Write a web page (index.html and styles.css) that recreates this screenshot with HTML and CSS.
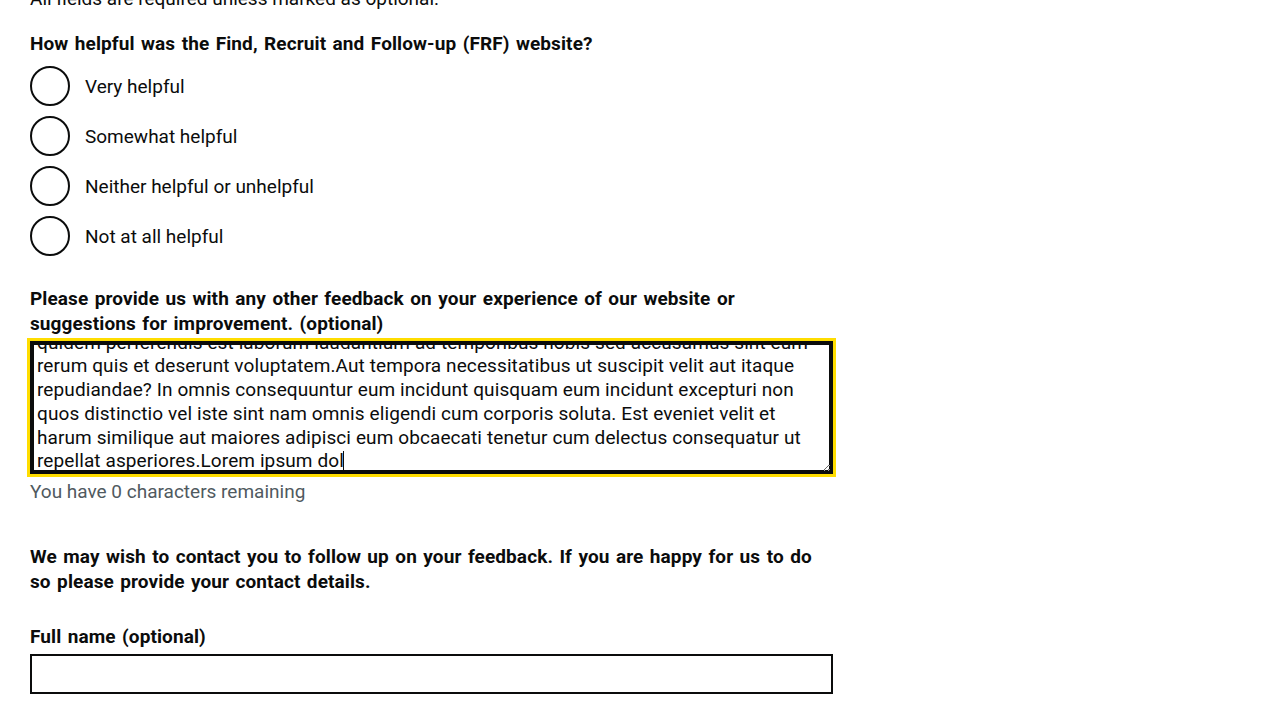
FILE: index.html
```html
<!DOCTYPE html>
<html lang="en">
<head>
<meta charset="utf-8">
<title>Give feedback - Find, Recruit and Follow-up</title>
<link rel="stylesheet" href="styles.css">
</head>
<body>
<main class="page">
  <div class="column">
    <h1 class="page-title">Give feedback on Find, Recruit and Follow-up</h1>
    <p class="body-text js-intro">All fields are required unless marked as optional.</p>

    <div class="form-group">
      <fieldset class="fieldset">
        <legend class="legend">How helpful was the Find, Recruit and Follow-up (FRF) website?</legend>
        <div class="radios">
          <div class="radio-item">
            <input class="radio-input" id="helpful-1" name="helpful" type="radio" value="very">
            <label class="radio-label" for="helpful-1">Very helpful</label>
          </div>
          <div class="radio-item">
            <input class="radio-input" id="helpful-2" name="helpful" type="radio" value="somewhat">
            <label class="radio-label" for="helpful-2">Somewhat helpful</label>
          </div>
          <div class="radio-item">
            <input class="radio-input" id="helpful-3" name="helpful" type="radio" value="neither">
            <label class="radio-label" for="helpful-3">Neither helpful or unhelpful</label>
          </div>
          <div class="radio-item">
            <input class="radio-input" id="helpful-4" name="helpful" type="radio" value="not">
            <label class="radio-label" for="helpful-4">Not at all helpful</label>
          </div>
        </div>
      </fieldset>
    </div>

    <div class="form-group char-count">
      <label class="label" for="feedback">Please provide us with any other feedback on your experience of our website or suggestions for improvement. (optional)</label>
      <div class="textarea-wrap">
        <textarea class="textarea is-focused js-feedback" id="feedback" name="feedback" rows="5">Lorem ipsum dolor sit amet. Aut quidem perferendis est laborum laudantium ad temporibus nobis sed accusamus sint eum rerum quis et deserunt voluptatem.Aut tempora necessitatibus ut suscipit velit aut itaque repudiandae? In omnis consequuntur eum incidunt quisquam eum incidunt excepturi non quos distinctio vel iste sint nam omnis eligendi cum corporis soluta. Est eveniet velit et harum similique aut maiores adipisci eum obcaecati tenetur cum delectus consequatur ut repellat asperiores.Lorem ipsum dolor sit amet. Aut
quidem perferendis est laborum laudantium ad temporibus nobis sed accusamus sint eum
rerum quis et deserunt voluptatem.Aut tempora necessitatibus ut suscipit velit aut itaque repudiandae? In omnis consequuntur eum incidunt quisquam eum incidunt excepturi non quos distinctio vel iste sint nam omnis eligendi cum corporis soluta. Est eveniet velit et harum similique aut maiores adipisci eum obcaecati tenetur cum delectus consequatur ut repellat asperiores.Lorem ipsum dol</textarea>
        <span class="caret" aria-hidden="true"></span>
      </div>
      <div class="hint count-message">You have 0 characters remaining</div>
    </div>

    <p class="body-text bold contact-intro">We may wish to contact you to follow up on your feedback. If you are happy for us to do so please provide your contact details.</p>

    <div class="form-group">
      <label class="label" for="full-name">Full name (optional)</label>
      <input class="input" id="full-name" name="fullName" type="text">
    </div>

    <div class="form-group">
      <label class="label" for="email">Email address (optional)</label>
      <input class="input" id="email" name="email" type="email">
    </div>

    <button class="button" type="submit">Send feedback</button>
  </div>
</main>
<script src="script.js"></script>
</body>
</html>
```

FILE: styles.css
```css
*,
*::before,
*::after {
  box-sizing: border-box;
}

html, body {
  margin: 0;
  padding: 0;
  background: #ffffff;
}

body {
  font-family: Roboto, "Liberation Sans", Arial, sans-serif;
  color: #0b0c0c;
  font-size: 19px;
  line-height: 25px;
}

.page {
  padding: 40px 30px 120px;
}

.column {
  width: 803px;
}

.page-title {
  font-size: 48px;
  line-height: 50px;
  font-weight: 700;
  margin: 0 0 30px;
}

.body-text {
  margin: 0 0 20px;
}

.bold,
.legend,
.label {
  font-weight: 700;
  letter-spacing: 0.1px;
  word-spacing: 1.6px;
}

.contact-intro {
  margin: 40px 0 30px;
}

.form-group {
  margin-bottom: 30px;
}

.fieldset {
  margin: 0;
  padding: 0;
  border: 0;
  min-width: 0;
}

.legend {
  padding: 0;
  margin: 0 0 10px;
  font-size: 19px;
  line-height: 25px;
}

.radios {
  display: flex;
  flex-direction: column;
  gap: 10px;
}

.radio-item {
  position: relative;
  display: flex;
  min-height: 40px;
  padding-left: 40px;
}

.radio-input {
  position: absolute;
  top: -2px;
  left: -2px;
  width: 44px;
  height: 44px;
  margin: 0;
  opacity: 0;
  z-index: 1;
  cursor: pointer;
}

.radio-label {
  display: inline-block;
  padding: 8px 15px 5px;
  cursor: pointer;
}

.radio-label::before {
  content: "";
  position: absolute;
  top: 0;
  left: 0;
  width: 40px;
  height: 40px;
  border: 2px solid currentColor;
  border-radius: 50%;
  background: transparent;
}

.label {
  display: block;
  margin-bottom: 5px;
}

.textarea-wrap {
  position: relative;
}

.textarea {
  display: block;
  width: 100%;
  margin: 0;
  padding: 5px;
  border: 2px solid #0b0c0c;
  border-radius: 0;
  font-family: inherit;
  font-size: 19px;
  line-height: 1.25;
  letter-spacing: 0.1px;
  color: #0b0c0c;
  caret-color: transparent;
  resize: vertical;
  scrollbar-width: none;
  background: #ffffff;
}

.textarea.is-focused,
.textarea:focus {
  outline: 3px solid #ffdd00;
  outline-offset: 0;
  box-shadow: inset 0 0 0 2px #0b0c0c;
}

.caret {
  position: absolute;
  left: 313px;
  top: 110px;
  width: 1px;
  height: 21px;
  background: #0b0c0c;
  pointer-events: none;
}

.char-count .textarea-wrap {
  margin-bottom: 5px;
}

.hint {
  color: #505a5f;
}

.input {
  display: block;
  width: 100%;
  height: 40px;
  margin: 0;
  padding: 5px;
  border: 2px solid #0b0c0c;
  border-radius: 0;
  font-family: inherit;
  font-size: 19px;
  color: #0b0c0c;
  background: #ffffff;
}

.button {
  font-family: inherit;
  font-size: 19px;
  line-height: 1;
  padding: 8px 10px 7px;
  border: 2px solid transparent;
  border-radius: 0;
  color: #ffffff;
  background: #00703c;
  box-shadow: 0 2px 0 #002d18;
  cursor: pointer;
}
```

FILE: script.js
```js
(function () {
  var ta = document.querySelector('.js-feedback');
  var len = ta.value.length;
  ta.focus({ preventScroll: true });
  ta.setSelectionRange(len, len);
  var max = ta.scrollHeight - ta.clientHeight;
  ta.scrollTop = Math.max(0, max - 6);
  var intro = document.querySelector('.js-intro');
  var top = intro.getBoundingClientRect().top + window.scrollY;
  window.scrollTo(0, Math.round(top + 14));
})();
```
